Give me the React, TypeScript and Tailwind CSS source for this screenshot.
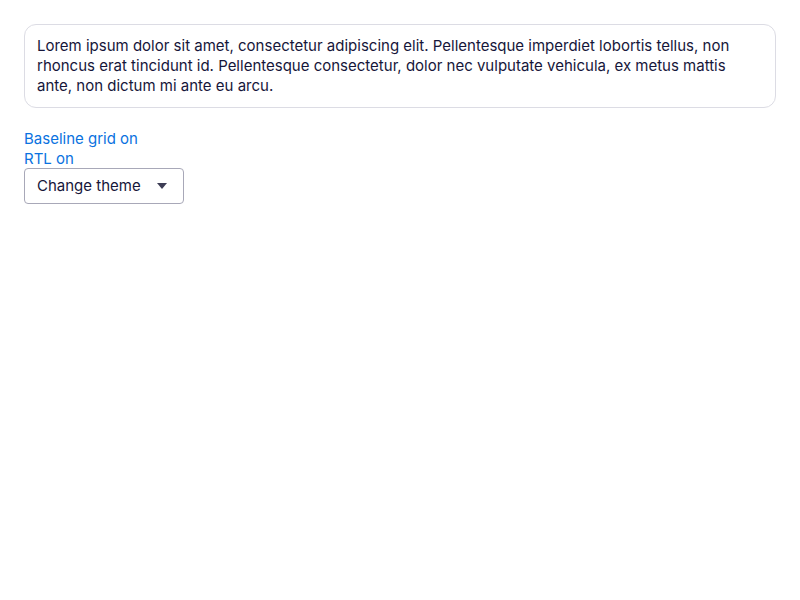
export default function App() {
  return (
    <div
      className="min-h-screen bg-white p-6 text-[15px] leading-5 text-[#16163a]"
      style={{ fontFamily: "Inter, 'Noto Sans', sans-serif" }}
    >
      <div className="rounded-xl border border-[#dcdce4] px-3 py-[11px]">
        Lorem ipsum dolor sit amet, consectetur adipiscing elit. Pellentesque imperdiet lobortis tellus, non
        rhoncus erat tincidunt id. Pellentesque consectetur, dolor nec vulputate vehicula, ex metus mattis
        ante, non dictum mi ante eu arcu.
      </div>

      <div className="mt-[21px] flex flex-col items-start text-[#0a72e0]">
        <a href="#" className="block">Baseline grid on</a>
        <a href="#" className="block">RTL on</a>
      </div>

      <button
        type="button"
        className="-mt-px flex h-9 w-40 items-center justify-between rounded border border-[#a8a8b8] bg-white pl-3 pr-4 text-[#16163a]"
      >
        <span>Change theme</span>
        <svg width="10" height="6" viewBox="0 0 10 6" aria-hidden="true">
          <path d="M0 0h10L5 6z" fill="#3d3d55" />
        </svg>
      </button>
    </div>
  );
}
